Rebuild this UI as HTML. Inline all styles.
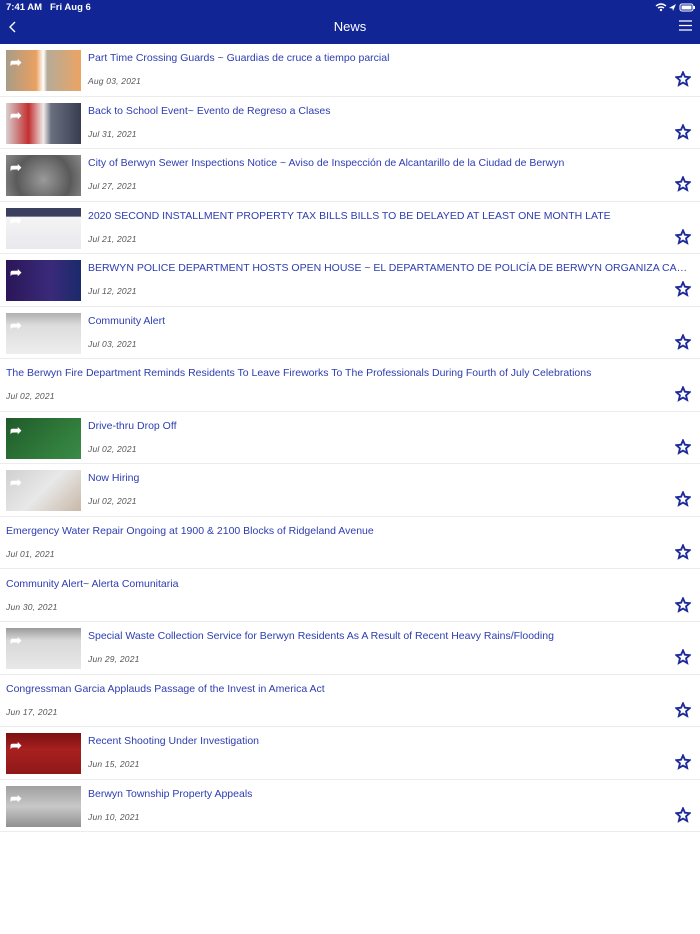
<!DOCTYPE html>
<html><head><meta charset="utf-8"><style>
*{margin:0;padding:0;box-sizing:border-box}
body{width:700px;height:934px;background:#fff;font-family:"Liberation Sans",sans-serif;overflow:hidden;position:relative}
.hdr{position:absolute;left:0;top:0;width:700px;height:44px;background:#112594;color:#fff}
.st{position:absolute;left:6px;top:2px;font-size:9.5px;font-weight:bold}
.title{position:absolute;left:0;width:700px;top:19px;text-align:center;font-size:13px}
.row{position:absolute;left:0;width:700px;height:52.5px;border-bottom:1px solid #ececec}
.th{position:absolute;left:6px;top:6px;width:75px;height:41px;overflow:hidden}
.th i{position:absolute;left:4px;top:4px;color:#fff;font-style:normal;font-size:14px;font-weight:bold}
.t{position:absolute;top:8px;font-size:10.5px;color:#2d3db0;white-space:nowrap;overflow:hidden;text-overflow:ellipsis;width:600px}
.d{position:absolute;top:32px;font-size:8.5px;color:#555;font-style:italic;letter-spacing:0.2px}
.s{position:absolute;left:675px;top:27px}
</style></head><body>
<div class="hdr">
<div class="st">7:41 AM&nbsp;&nbsp; Fri Aug 6</div>
<svg style="position:absolute;left:655px;top:3px" width="42" height="9"><path d="M1 3 Q6 -1 11 3 M3 5 Q6 3 9 5" stroke="#fff" stroke-width="1.4" fill="none"/><circle cx="6" cy="7" r="1.2" fill="#fff"/><path d="M14 5 L21 1 L18 8 L17.5 5.5Z" fill="#fff"/><rect x="25" y="1" width="13" height="7" rx="2" fill="none" stroke="#fff"/><rect x="26.5" y="2.5" width="10" height="4" fill="#fff"/><rect x="38.5" y="3" width="1.5" height="3" fill="#fff"/></svg>
<svg style="position:absolute;left:8px;top:21px" width="10" height="12"><path d="M7 1 L2 6 L7 11" stroke="#fff" stroke-width="1.4" fill="none"/></svg>
<div class="title">News</div>
<svg style="position:absolute;left:679px;top:20px" width="13" height="11"><path d="M0 1H13M0 5.5H13M0 10H13" stroke="#fff" stroke-width="1.2"/></svg>
</div>
<div id="list"></div>
<script>
var items=[
["Part Time Crossing Guards ~ Guardias de cruce a tiempo parcial","Aug 03, 2021","linear-gradient(90deg,#a89c88,#e9a060 40%,#fff 50%,#b5ab98 55%,#eca464)"],
["Back to School Event~ Evento de Regreso a Clases","Jul 31, 2021","linear-gradient(90deg,#d8d0d0,#c23030 30%,#f0eaea 50%,#6a7080 60%,#383c50)"],
["City of Berwyn Sewer Inspections Notice ~ Aviso de Inspección de Alcantarillo de la Ciudad de Berwyn","Jul 27, 2021","radial-gradient(circle at 50% 60%,#9a9a9a,#5a5a5a 60%,#8a8a8a)"],
["2020 SECOND INSTALLMENT PROPERTY TAX BILLS BILLS TO BE DELAYED AT LEAST ONE MONTH LATE","Jul 21, 2021","linear-gradient(180deg,#3a3f60 0,#3a3f60 20%,#f4f4f4 22%,#e8e8ee)"],
["BERWYN POLICE DEPARTMENT HOSTS OPEN HOUSE ~ EL DEPARTAMENTO DE POLICÍA DE BERWYN ORGANIZA CASA ABIERTA","Jul 12, 2021","linear-gradient(90deg,#2a1658,#3a2a7a 60%,#1a2a6a)"],
["Community Alert","Jul 03, 2021","linear-gradient(180deg,#b0b0b0,#dcdcdc 30%,#eeeeee)"],
["The Berwyn Fire Department Reminds Residents To Leave Fireworks To The Professionals During Fourth of July Celebrations","Jul 02, 2021",""],
["Drive-thru Drop Off","Jul 02, 2021","linear-gradient(135deg,#1f5a2a,#2f7a3a 60%,#3a8a48)"],
["Now Hiring","Jul 02, 2021","linear-gradient(135deg,#d0d0d0,#e8e8e8 50%,#c8b8a8)"],
["Emergency Water Repair Ongoing at 1900 &amp; 2100 Blocks of Ridgeland Avenue","Jul 01, 2021",""],
["Community Alert~ Alerta Comunitaria","Jun 30, 2021",""],
["Special Waste Collection Service for Berwyn Residents As A Result of Recent Heavy Rains/Flooding","Jun 29, 2021","linear-gradient(180deg,#9a9a9a,#d8d8d8 30%,#e8e8e8)"],
["Congressman Garcia Applauds Passage of the Invest in America Act","Jun 17, 2021",""],
["Recent Shooting Under Investigation","Jun 15, 2021","linear-gradient(180deg,#7a1010,#a82020 40%,#901818)"],
["Berwyn Township Property Appeals","Jun 10, 2021","linear-gradient(180deg,#a0a0a0,#c8c8c8 50%,#909090)"]];
var h="";
items.forEach(function(it,i){
var top=44+i*52.55;var x=it[2]?88:6;
h+='<div class="row" style="top:'+top+'px">';
if(it[2])h+='<div class="th" style="background:'+it[2]+'"><i>➦</i></div>';
h+='<div class="t" style="left:'+x+'px">'+it[0]+'</div><div class="d" style="left:'+x+'px">'+it[1]+'</div>';
h+='<svg class="s" width="16" height="16" viewBox="0 0 24 24"><path d="M12 2 L14.9 8.6 L22 9.3 L16.6 14 L18.2 21 L12 17.3 L5.8 21 L7.4 14 L2 9.3 L9.1 8.6Z" fill="none" stroke="#1d2a9a" stroke-width="2.8" stroke-linejoin="miter"/></svg></div>';
});
document.getElementById("list").innerHTML=h;
</script>
</body></html>
